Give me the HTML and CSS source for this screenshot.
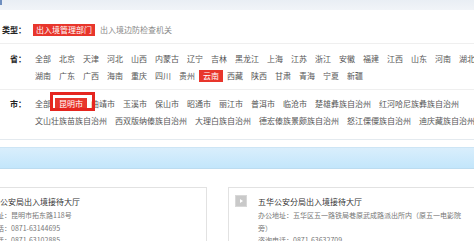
FILE: index.html
```html
<!DOCTYPE html>
<html lang="zh-CN">
<head>
    <meta charset="UTF-8">
    <title>出入境接待大厅</title>
    <link rel="stylesheet" href="styles.css">
</head>
<body>
    <div class="page">
        <div class="topbar"><span class="topbar-mark"></span></div>

        <div class="filter">
            <div class="filter-row filter-type">
                <span class="filter-label">类型：</span>
                <a class="type-tag type-active">出入境管理部门</a>
                <a class="type-tag">出入境边防检查机关</a>
            </div>

            <div class="filter-row filter-prov">
                <span class="filter-label">省：</span>
                <div class="filter-items">
                    <a class="filter-item">全部</a>
                    <a class="filter-item">北京</a>
                    <a class="filter-item">天津</a>
                    <a class="filter-item">河北</a>
                    <a class="filter-item">山西</a>
                    <a class="filter-item">内蒙古</a>
                    <a class="filter-item">辽宁</a>
                    <a class="filter-item">吉林</a>
                    <a class="filter-item">黑龙江</a>
                    <a class="filter-item">上海</a>
                    <a class="filter-item">江苏</a>
                    <a class="filter-item">浙江</a>
                    <a class="filter-item">安徽</a>
                    <a class="filter-item">福建</a>
                    <a class="filter-item">江西</a>
                    <a class="filter-item">山东</a>
                    <a class="filter-item">河南</a>
                    <a class="filter-item">湖北</a>
                    <a class="filter-item">湖南</a>
                    <a class="filter-item">广东</a>
                    <a class="filter-item">广西</a>
                    <a class="filter-item">海南</a>
                    <a class="filter-item">重庆</a>
                    <a class="filter-item">四川</a>
                    <a class="filter-item">贵州</a>
                    <a class="filter-item item-active">云南</a>
                    <a class="filter-item">西藏</a>
                    <a class="filter-item">陕西</a>
                    <a class="filter-item">甘肃</a>
                    <a class="filter-item">青海</a>
                    <a class="filter-item">宁夏</a>
                    <a class="filter-item">新疆</a>
                </div>
            </div>

            <div class="filter-row filter-city">
                <span class="filter-label">市：</span>
                <div class="filter-items">
                    <a class="filter-item">全部</a>
                    <a class="filter-item item-active item-marked">昆明市</a>
                    <a class="filter-item">曲靖市</a>
                    <a class="filter-item">玉溪市</a>
                    <a class="filter-item">保山市</a>
                    <a class="filter-item">昭通市</a>
                    <a class="filter-item">丽江市</a>
                    <a class="filter-item">普洱市</a>
                    <a class="filter-item">临沧市</a>
                    <a class="filter-item">楚雄彝族自治州</a>
                    <a class="filter-item">红河哈尼族彝族自治州</a>
                    <a class="filter-item">文山壮族苗族自治州</a>
                    <a class="filter-item">西双版纳傣族自治州</a>
                    <a class="filter-item">大理白族自治州</a>
                    <a class="filter-item">德宏傣族景颇族自治州</a>
                    <a class="filter-item">怒江傈僳族自治州</a>
                    <a class="filter-item">迪庆藏族自治州</a>
                </div>
            </div>
        </div>

        <div class="result-bar"></div>

        <div class="hall-list">
            <div class="hall-card">
                <span class="hall-icon">
                    <svg width="12" height="12" viewBox="0 0 12 12"><path d="M5 4 L8 6 L5 8 Z" fill="#fff"/></svg>
                </span>
                <div class="hall-info">
                    <div class="hall-name">昆明市公安局出入境接待大厅</div>
                    <div class="hall-line">办公地址：昆明市拓东路118号</div>
                    <div class="hall-line">咨询电话：0871-63144695</div>
                    <div class="hall-line">传真电话：0871-63102885</div>
                </div>
            </div>
            <div class="hall-card">
                <span class="hall-icon">
                    <svg width="12" height="12" viewBox="0 0 12 12"><path d="M5 4 L8 6 L5 8 Z" fill="#fff"/></svg>
                </span>
                <div class="hall-info">
                    <div class="hall-name">五华公安分局出入境接待大厅</div>
                    <div class="hall-line">办公地址：五华区五一路铁局巷原武成路派出所内（原五一电影院旁）</div>
                    <div class="hall-line">咨询电话：0871-63632709</div>
                </div>
            </div>
        </div>
    </div>
</body>
</html>
```

FILE: styles.css
```css
/* Base */
body {
    margin: 0;
    background: #fff;
    font-family: "Noto Sans CJK SC", "Liberation Sans", sans-serif;
    color: #555;
    overflow: hidden;
}
.page {
    width: 520px;
}
a {
    text-decoration: none;
}

.topbar {
    height: 10px;
    background: linear-gradient(#e9eef4, #f1f4f8);
}
.topbar-mark {
    display: block;
    width: 2px;
    height: 5px;
    background: #6f8fbf;
}

/* Filter rows */
.filter-row {
    display: flex;
    align-items: flex-start;
    font-size: 8px;
    line-height: 12px;
}
.filter-label {
    flex: none;
    width: 26px;
    text-align: right;
    color: #222;
    font-weight: 600;
}
.filter-type {
    padding: 14px 0 7px;
    border-bottom: 1px solid #efefef;
    align-items: center;
}
.type-tag {
    color: #888;
    padding: 0 3px;
    margin-left: 2px;
}
.type-active {
    margin-left: 7px;
    background: #e8362c;
    color: #fff;
}
.filter-prov {
    padding: 9px 0 7px;
    border-bottom: 1px solid #efefef;
}
.filter-city {
    padding: 8px 0 12px;
    border-bottom: 1px solid #e4eaef;
}
.filter-items {
    display: flex;
    flex-wrap: wrap;
    row-gap: 5px;
    width: 460px;
    padding-left: 5px;
}
.filter-item {
    padding: 0 4px;
    height: 12px;
    color: #555;
    white-space: nowrap;
}
.item-active {
    background: #e8362c;
    color: #fff;
}
/* red annotation frame drawn round the chosen city */
.item-marked {
    position: relative;
    z-index: 1;
    box-shadow: 1px -1px 0 3px #fff;
}
.item-marked::after {
    content: "";
    position: absolute;
    left: -5px;
    right: -8px;
    top: -6px;
    bottom: -1px;
    border: 3px solid #e5251f;
}

/* Result header bar */
.result-bar {
    margin-top: 7px;
    height: 20px;
    border-top: 1px solid #cde5f5;
    border-bottom: 1px solid #bcdcf0;
    background: linear-gradient(#d9eefc, #c3e6fb);
}

/* Hall cards */
.hall-list {
    display: grid;
    grid-template-columns: 261px 261px;
    column-gap: 21px;
    margin: 18px 0 0 -54px;
}
.hall-card {
    display: flex;
    border: 1px solid #e2e2e2;
    padding: 7px 24px 10px 6px;
}
.hall-icon {
    flex: none;
    width: 12px;
    height: 12px;
    margin: 0 11px 0 0;
    background: #c9c9c9;
    border: 1px solid #d8d8d8;
    box-sizing: border-box;
}
.hall-icon svg {
    display: block;
    margin: -1px;
}
.hall-info {
    flex: 1;
    min-width: 0;
}
.hall-name {
    font-size: 8px;
    line-height: 14px;
    color: #333;
}
.hall-line {
    font-size: 7px;
    line-height: 12.5px;
    color: #777;
}
```
